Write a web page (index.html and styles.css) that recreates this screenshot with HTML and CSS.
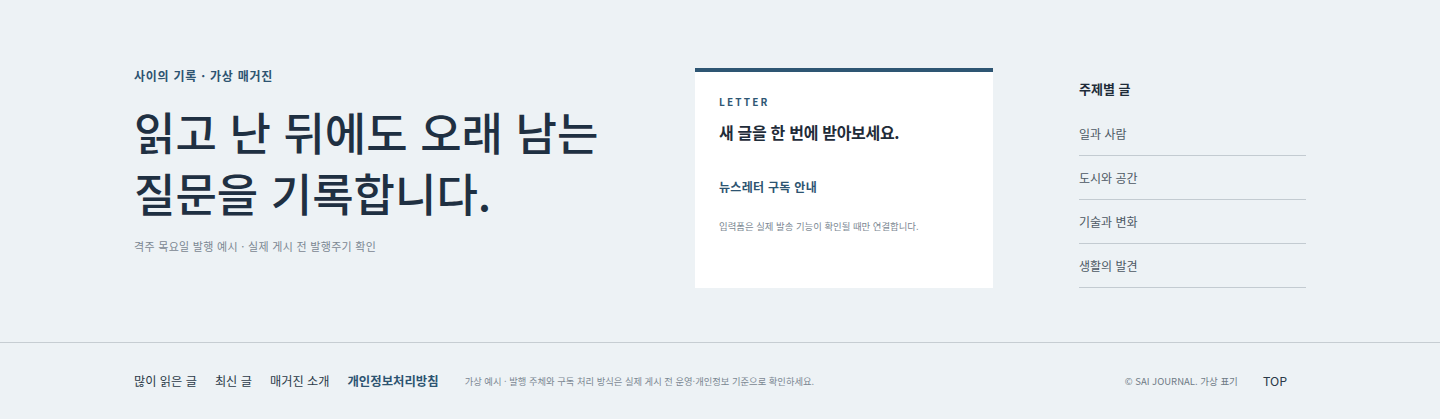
FILE: index.html
```html
<!DOCTYPE html>
<html lang="ko">
<head>
<meta charset="utf-8">
<title>사이의 기록</title>
<link rel="stylesheet" href="styles.css">
</head>
<body>
<main class="hero">
  <section class="intro">
    <p class="kicker">사이의 기록 · 가상 매거진</p>
    <h1 class="headline">읽고 난 뒤에도 오래 남는<br>질문을 기록합니다.</h1>
    <p class="sub">격주 목요일 발행 예시 · 실제 게시 전 발행주기 확인</p>
  </section>
  <aside class="card">
    <p class="card-label">LETTER</p>
    <h2 class="card-title">새 글을 한 번에 받아보세요.</h2>
    <h3 class="card-link">뉴스레터 구독 안내</h3>
    <p class="card-note">입력폼은 실제 발송 기능이 확인될 때만 연결합니다.</p>
  </aside>
  <nav class="topics">
    <h2 class="topics-title">주제별 글</h2>
    <ul class="topic-list">
      <li>일과 사람</li>
      <li>도시와 공간</li>
      <li>기술과 변화</li>
      <li>생활의 발견</li>
    </ul>
  </nav>
</main>
<footer class="footer">
  <div class="footer-inner">
    <nav class="footer-links">
      <a>많이 읽은 글</a>
      <a>최신 글</a>
      <a>매거진 소개</a>
      <a class="strong">개인정보처리방침</a>
    </nav>
    <p class="footer-note">가상 예시 · 발행 주체와 구독 처리 방식은 실제 게시 전 운영·개인정보 기준으로 확인하세요.</p>
    <p class="copy">© SAI JOURNAL. 가상 표기</p>
    <a class="top">TOP</a>
  </div>
</footer>
</body>
</html>
```

FILE: styles.css
```css
* { box-sizing: border-box; }
html, body { margin: 0; padding: 0; }
body {
  background: #edf2f5;
  font-family: "Noto Sans CJK KR", "Noto Sans", sans-serif;
  color: #1f3042;
  width: 1440px;
  height: 419px;
  overflow: hidden;
}
p, h1, h2, h3, ul { margin: 0; padding: 0; }

.hero {
  display: grid;
  grid-template-columns: 475px 298px 227px;
  column-gap: 86px;
  padding: 68px 0 0 134px;
  height: 342px;
  align-items: start;
}

.kicker {
  margin-top: 1px;
  font-size: 12px;
  font-weight: 700;
  color: #2d5471;
  line-height: 14px;
  letter-spacing: 0.75px;
}
.headline {
  margin-top: 18px;
  font-size: 45px;
  font-weight: 500;
  line-height: 61px;
  letter-spacing: 0;
  color: #1f3042;
  white-space: nowrap;
}
.sub {
  margin-top: 16px;
  font-size: 11px;
  line-height: 14px;
  color: #7b8792;
  letter-spacing: 0.3px;
}

.card {
  background: #fff;
  border-top: 4px solid #2e5673;
  height: 220px;
  padding: 23px 24px 0;
}
.card-label {
  font-size: 10px;
  font-weight: 700;
  letter-spacing: 2.2px;
  color: #2e5673;
  line-height: 14px;
}
.card-title {
  margin-top: 13px;
  font-size: 16px;
  font-weight: 700;
  line-height: 20px;
  color: #1f2c39;
  letter-spacing: -0.3px;
}
.card-link {
  margin-top: 37px;
  font-size: 12px;
  font-weight: 700;
  line-height: 16px;
  color: #2d5471;
  letter-spacing: 0.3px;
}
.card-note {
  margin-top: 25px;
  font-size: 9.4px;
  line-height: 12px;
  color: #7b8792;
}

.topics { padding-top: 12px; }
.topics-title {
  font-size: 13px;
  font-weight: 700;
  line-height: 18px;
  color: #1f2c39;
}
.topic-list {
  list-style: none;
  margin-top: 14px;
}
.topic-list li {
  font-size: 12px;
  line-height: 16px;
  color: #4c5863;
  padding: 14px 0 13px;
  border-bottom: 1px solid #c3cbd1;
}
.topic-list li:first-child { padding-top: 14px; }

.footer {
  border-top: 1px solid #c6cdd2;
  height: 77px;
}
.footer-inner {
  display: flex;
  align-items: center;
  height: 76px;
  padding: 0 0 0 134px;
  box-sizing: content-box;
  width: 1153px;
}
.footer-links {
  display: flex;
  gap: 18px;
}
.footer-links a {
  font-size: 12.2px;
  color: #2b3a48;
  line-height: 16px;
}
.footer-links a.strong {
  font-weight: 700;
  color: #2d5471;
  font-size: 12.4px;
}
.footer-note {
  margin-left: 26px;
  font-size: 9.3px;
  color: #7b8792;
}
.copy {
  margin-left: auto;
  font-size: 9.5px;
  color: #6f7b86;
}
.top {
  margin-left: 25px;
  font-size: 12.4px;
  color: #2b3a48;
}
```
